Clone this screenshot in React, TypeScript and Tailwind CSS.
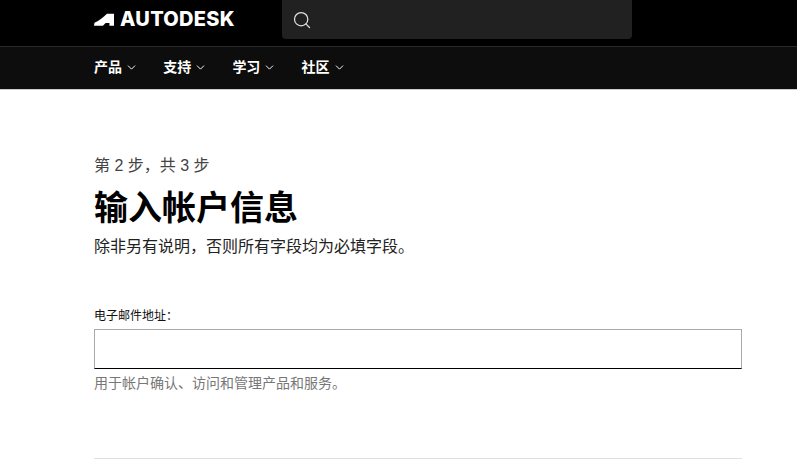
import { ChevronDown, Search } from "lucide-react";

const navItems = ["产品", "支持", "学习", "社区"];

function Logo() {
  return (
    <div className="flex items-center gap-[6px]">
      <svg width="20" height="13" viewBox="0 0 21 13" fill="#fff">
        <path d="M0 13 L0.5 10 C5.5 8 10 3.6 13.6 0.5 L21 0.5 L21 13 L16.2 13 L16.2 10.2 L12.2 10.2 L9.4 13 Z" />
      </svg>
      <span className="text-[20px] leading-none font-extrabold tracking-[0.3px] text-white font-['Inter',sans-serif]">AUTODESK</span>
    </div>
  );
}

export default function App() {
  return (
    <div className="h-[465px] w-[797px] overflow-hidden bg-white font-['Liberation_Sans','Noto_Sans_CJK_SC',sans-serif]">
      <header className="flex h-[46px] items-center bg-black pl-[94px]">
        <div className="mt-[-8px] w-[188px]">
          <Logo />
        </div>
        <div className="mb-[7px] flex h-[39px] w-[350px] items-center rounded-b-[4px] bg-[#212121] pl-[10px]">
          <Search size={20} strokeWidth={1.5} className="text-[#e0e0e0]" />
        </div>
      </header>
      <nav className="flex h-[43px] items-center gap-[16px] border-t border-[#2b2b2b] bg-[#0d0d0d] pb-[1px] pl-[94px]">
        {navItems.map((item) => (
          <div key={item} className="flex w-[53.2px] items-center gap-[3px] text-[14px] font-bold text-white">
            <span>{item}</span>
            <ChevronDown size={13} strokeWidth={1.75} className="text-white" />
          </div>
        ))}
      </nav>
      <main className="border-t border-[#ccc] px-[94px] pt-[66px]">
        <p className="text-[16px] leading-[20px] text-[#444]">第 2 步，共 3 步</p>
        <h1 className="mt-[10px] text-[34px] leading-[44px] font-bold text-black">输入帐户信息</h1>
        <p className="mt-[7px] text-[16px] leading-[20px] text-[#222]">除非另有说明，否则所有字段均为必填字段。</p>
        <label className="mt-[51px] block text-[12px] leading-[16px] text-[#111]">电子邮件地址：</label>
        <div className="mt-[5px] h-[40px] w-[648px] border border-b-[1.5px] border-[#aaa] border-b-black bg-white" />
        <p className="mt-[6px] text-[14px] leading-[16px] text-[#777]">用于帐户确认、访问和管理产品和服务。</p>
        <div className="mt-[67px] h-px w-[648px] bg-[#e0e0e0]" />
      </main>
    </div>
  );
}
